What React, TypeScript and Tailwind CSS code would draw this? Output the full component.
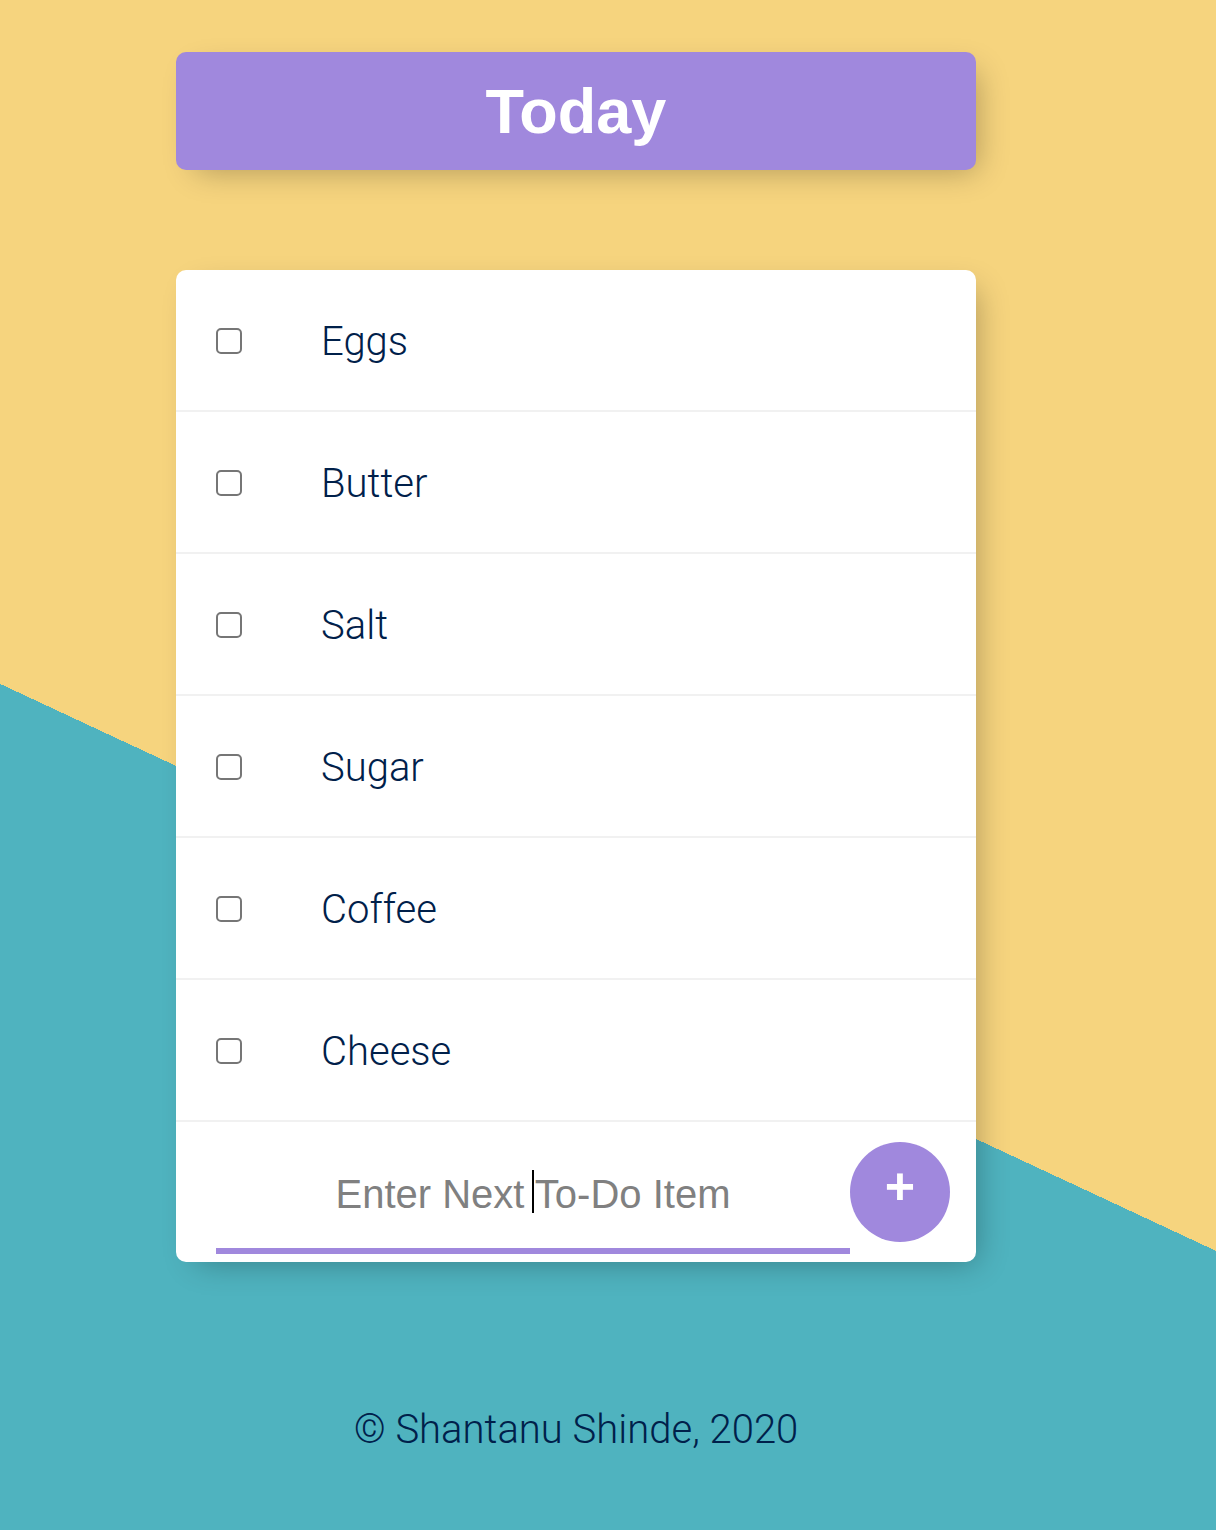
import React from 'react';

const ITEMS = ['Eggs', 'Butter', 'Salt', 'Sugar', 'Coffee', 'Cheese'];

const TodoRow: React.FC<{ label: string }> = ({ label }) => (
  <div className="flex h-[142px] items-center border-b-2 border-[#f1f1f1]">
    <input
      type="checkbox"
      className="ml-[40px] mt-[2px] h-[26px] w-[26px] shrink-0 appearance-none rounded-[5px] border-2 border-[#767676] bg-white"
    />
    <p className="mt-[3px] pl-[79px] font-['Roboto',sans-serif] text-[40px] font-light text-[#00204a]">{label}</p>
  </div>
);

const App: React.FC = () => {
  return (
    <div className="min-h-[1530px] bg-[linear-gradient(25deg,#4fb3bf_40.35%,#f6d47e_40.35%)] pt-[52px] font-['Liberation_Sans',Arial,sans-serif]">
      {/* Heading */}
      <div className="ml-[176px] flex h-[118px] w-[800px] items-center justify-center rounded-[10px] bg-[#a088dd] shadow-[10px_10px_30px_-10px_rgba(0,0,0,0.3)]">
        <h1 className="text-[63px] font-bold leading-none text-white">Today</h1>
      </div>

      {/* List */}
      <div className="ml-[176px] mt-[100px] w-[800px] overflow-hidden rounded-[10px] bg-white shadow-[10px_10px_30px_-10px_rgba(0,0,0,0.3)]">
        {ITEMS.map((item) => (
          <TodoRow key={item} label={item} />
        ))}
        <form className="flex h-[140px] items-center" onSubmit={(e) => e.preventDefault()}>
          <div className="relative ml-[40px] mt-[4px] h-[120px] w-[634px]">
            <input
              type="text"
              autoFocus
              placeholder="Enter Next To-Do Item"
              className="h-full w-full bg-transparent text-center text-[40px] caret-black shadow-[inset_0_-6px_0_0_#a088dd] outline-none placeholder:text-[#808080]"
            />
            {/* caret */}
            <span className="pointer-events-none absolute left-[316px] top-[36px] h-[43px] w-[2px] bg-black" />
          </div>
          <button
            type="submit"
            className="flex h-[100px] w-[100px] shrink-0 items-center justify-center rounded-full bg-[#a088dd] pb-[12px] text-[52px] font-bold leading-none text-white"
          >
            +
          </button>
        </form>
      </div>

      <footer className="mt-[145px] pr-[64px] text-center font-['Roboto',sans-serif] text-[40px] font-light leading-[46px] text-[#00204a]">
        © Shantanu Shinde, 2020
      </footer>
    </div>
  );
};

export default App;
